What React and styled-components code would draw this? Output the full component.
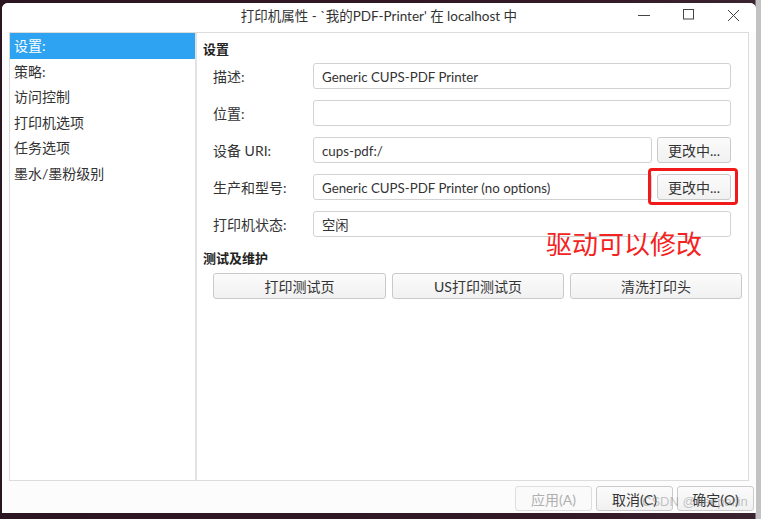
import React from 'react';
import styled, { createGlobalStyle } from 'styled-components';

const GlobalStyle = createGlobalStyle`
    html, body {
        margin: 0;
        padding: 0;
    }
    body {
        width: 761px;
        height: 519px;
        overflow: hidden;
        background: linear-gradient(to right, #2b1520 0, #331a26 600px, #3a2430 755px, #c2c2c2 756px);
        font-family: Lato, "Noto Sans CJK SC", sans-serif;
        color: #333;
    }
`;

const navItems = ['设置:', '策略:', '访问控制', '打印机选项', '任务选项', '墨水/墨粉级别'];

const fields = [
    { label: '描述:', value: 'Generic CUPS-PDF Printer' },
    { label: '位置:', value: '' },
    { label: '设备 URI:', value: 'cups-pdf:/', action: '更改中...' },
    { label: '生产和型号:', value: 'Generic CUPS-PDF Printer (no options)', action: '更改中...', marked: true },
    { label: '打印机状态:', value: '空闲' },
];

const App = () => {
    return (
        <>
            <GlobalStyle />
            <Screen>
                <Window>
                    <TitleBar>
                        <span />
                        <Title>打印机属性 - `我的PDF-Printer' 在 localhost 中</Title>
                        <Controls>
                            <ControlButton aria-label="minimize">
                                <svg width="14" height="14" viewBox="0 0 14 14">
                                    <path d="M1 7.5h12" stroke="#444" strokeWidth="1" />
                                </svg>
                            </ControlButton>
                            <ControlButton aria-label="maximize">
                                <svg width="12" height="12" viewBox="0 0 12 12">
                                    <rect x="0.5" y="0.5" width="10" height="9.5" fill="none" stroke="#444" strokeWidth="1" />
                                </svg>
                            </ControlButton>
                            <ControlButton aria-label="close">
                                <svg width="13" height="13" viewBox="0 0 13 13">
                                    <path d="M1 1l11 11M12 1L1 12" stroke="#444" strokeWidth="1" />
                                </svg>
                            </ControlButton>
                        </Controls>
                    </TitleBar>

                    <Panels>
                        <NavList>
                            {navItems.map((item, i) => (
                                <NavItem key={item} $active={i === 0}>{item}</NavItem>
                            ))}
                        </NavList>
                        <Splitter />
                        <Content>
                            <SectionTitle>设置</SectionTitle>
                            <Form>
                                {fields.map((f) => (
                                    <Row key={f.label}>
                                        <Label>{f.label}</Label>
                                        <Input readOnly value={f.value} />
                                        {f.action && (
                                            <Marked $on={f.marked}>
                                                <SmallButton>{f.action}</SmallButton>
                                            </Marked>
                                        )}
                                    </Row>
                                ))}
                            </Form>
                            <SectionTitle $top>测试及维护</SectionTitle>
                            <TestGrid>
                                <Button>打印测试页</Button>
                                <Button>US打印测试页</Button>
                                <Button>清洗打印头</Button>
                            </TestGrid>
                        </Content>
                    </Panels>

                    <Footer>
                        <DialogButton disabled>应用(A)</DialogButton>
                        <DialogButton>取消(C)</DialogButton>
                        <DialogButton>确定(O)</DialogButton>
                    </Footer>

                    <Annotation>驱动可以修改</Annotation>
                    <Watermark>CSDN @deepallin</Watermark>
                </Window>
            </Screen>
        </>
    );
};

const Screen = styled.div`
    padding: 3px 0 0 2px;
`;

const Window = styled.div`
    position: relative;
    width: 754px;
    height: 510px;
    background: #fcfcfc;
    border-radius: 6px 6px 0 0;
    display: flex;
    flex-direction: column;
`;

const TitleBar = styled.div`
    height: 29px;
    display: grid;
    grid-template-columns: 1fr auto 1fr;
    align-items: center;
    background: #fff;
    border-radius: 6px 6px 0 0;
`;

const Title = styled.div`
    font-size: 13.5px;
    color: #333;
    white-space: nowrap;
    margin-top: -5px;
`;

const Controls = styled.div`
    display: flex;
    justify-content: flex-end;
    align-self: stretch;
`;

const ControlButton = styled.div`
    width: 45px;
    display: flex;
    align-items: center;
    justify-content: center;
    margin-top: -5px;
`;

const Panels = styled.div`
    margin: 0 7px;
    height: 447px;
    border: 1px solid #dcdcdc;
    display: flex;
    background: #fff;
`;

const NavList = styled.div`
    width: 185px;
    display: flex;
    flex-direction: column;
`;

const NavItem = styled.div`
    height: 25.6px;
    line-height: 25px;
    padding-left: 4px;
    font-size: 14px;
    color: ${p => (p.$active ? '#fff' : '#333')};
    background: ${p => (p.$active ? '#2ea3f2' : 'transparent')};
`;

const Splitter = styled.div`
    width: 2px;
    background: #e2e2e2;
`;

const Content = styled.div`
    flex: 1;
    padding: 7px 6px 0 6px;
    display: flex;
    flex-direction: column;
`;

const SectionTitle = styled.div`
    font-size: 13px;
    font-weight: bold;
    line-height: 18px;
    color: #222;
    margin-top: ${p => (p.$top ? '12px' : '0')};
    margin-bottom: ${p => (p.$top ? '6px' : '5px')};
`;

const Form = styled.div`
    display: flex;
    flex-direction: column;
    gap: 11px;
    padding: 0 11px 0 10px;
`;

const Row = styled.div`
    display: flex;
    align-items: center;
    gap: 5px;
    height: 26px;
`;

const Label = styled.div`
    width: 95px;
    font-size: 14px;
    color: #333;
`;

const Input = styled.input`
    flex: 1;
    height: 26px;
    box-sizing: border-box;
    border: 1px solid #d2d2d2;
    border-radius: 3px;
    background: #fff;
    padding: 1px 8px 0;
    font-family: inherit;
    font-size: 13.3px;
    color: #333;
    outline: none;
`;

const Marked = styled.span`
    position: relative;
    display: flex;

    &::after {
        content: '';
        display: ${p => (p.$on ? 'block' : 'none')};
        position: absolute;
        top: -6px;
        left: -9px;
        right: -7px;
        bottom: -5px;
        border: 3px solid #f01a1a;
        border-radius: 4px;
    }
`;

const Button = styled.button`
    height: 26px;
    box-sizing: border-box;
    border: 1px solid #cacaca;
    border-radius: 3px;
    background: linear-gradient(#fbfbfb, #f1f1f1);
    font-family: inherit;
    font-size: 14px;
    color: #333;
    padding: 0;
`;

const SmallButton = styled(Button)`
    width: 74px;
`;

const TestGrid = styled.div`
    display: grid;
    grid-template-columns: 173px 172px 172px;
    gap: 6px;
    padding-left: 10px;
`;

const Footer = styled.div`
    display: flex;
    justify-content: flex-end;
    gap: 4px;
    padding: 5px 2px 0 0;
`;

const DialogButton = styled(Button)`
    width: 77px;
    height: 25px;
    color: ${p => (p.disabled ? '#b0b0b0' : '#333')};
    border-color: ${p => (p.disabled ? '#dedede' : '#cacaca')};
    background: ${p => (p.disabled ? '#fafafa' : 'linear-gradient(#fbfbfb, #f1f1f1)')};
`;

const Annotation = styled.div`
    position: absolute;
    left: 544px;
    top: 225px;
    font-size: 26px;
    line-height: 32px;
    color: #f52222;
    white-space: nowrap;
`;

const Watermark = styled.div`
    position: absolute;
    left: 640px;
    top: 491px;
    font-family: "Liberation Sans", sans-serif;
    font-size: 13px;
    color: rgba(140, 140, 140, 0.5);
    white-space: nowrap;
    pointer-events: none;
`;

export default App;
